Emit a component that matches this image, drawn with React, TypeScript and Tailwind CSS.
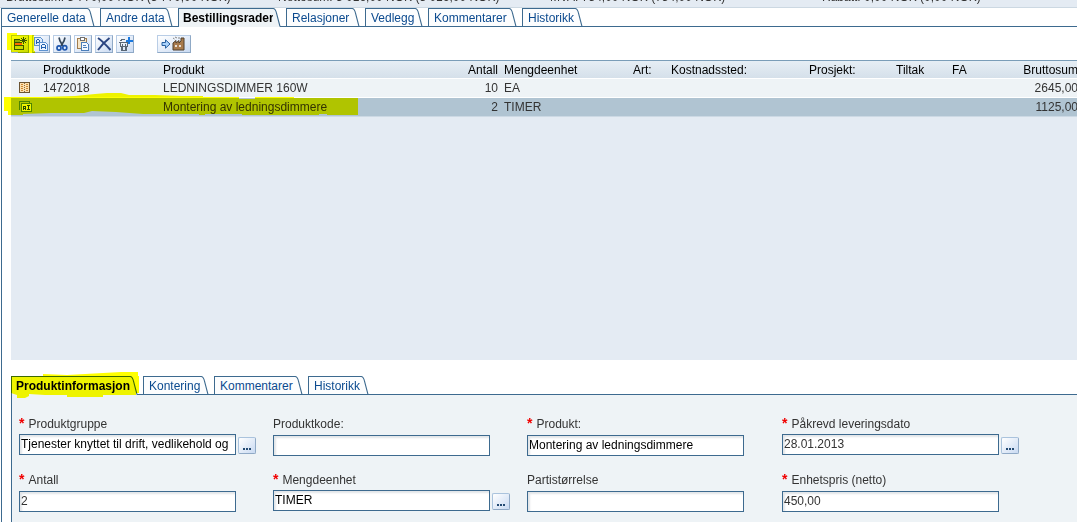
import React, { useState } from "react";
import clsx from "clsx";

const totals = [
  "Bruttosum: 3 770,00 NOK (3 770,00 NOK)",
  "Nettosum: 3 016,00 NOK (3 016,00 NOK)",
  "MVA: 754,00 NOK (754,00 NOK)",
  "Rabatt: 0,00 NOK (0,00 NOK)",
];

type TabItem = { label: string; width: string };

const orderTabs: TabItem[] = [
  { label: "Generelle data", width: "w-[94px]" },
  { label: "Andre data", width: "w-[73px]" },
  { label: "Bestillingsrader", width: "w-[103px]" },
  { label: "Relasjoner", width: "w-[74px]" },
  { label: "Vedlegg", width: "w-[58px]" },
  { label: "Kommentarer", width: "w-[89px]" },
  { label: "Historikk", width: "w-[61px]" },
];

const rowTabs: TabItem[] = [
  { label: "Produktinformasjon", width: "w-[127px]" },
  { label: "Kontering", width: "w-[66px]" },
  { label: "Kommentarer", width: "w-[89px]" },
  { label: "Historikk", width: "w-[61px]" },
];

function Tabs({ items, initial, name }: { items: TabItem[]; initial: number; name: string }) {
  const [active, setActive] = useState(initial);
  return (
    <div role="tablist" aria-label={name} className="flex h-[19px] gap-[5px] border-b border-[#3d6a8f]">
      {items.map((t, i) => {
        const on = i === active;
        return (
          <button
            key={t.label}
            type="button"
            role="tab"
            aria-selected={on}
            onClick={() => setActive(i)}
            className={clsx("flex shrink-0 text-left", t.width, on ? "relative h-[19px]" : "h-[18px]")}
          >
            <span
              className={clsx(
                "h-full min-w-0 flex-1 border-t border-l border-[#3d6a8f] leading-[18px] whitespace-nowrap",
                on ? "bg-[#eef3f6] pl-1 font-bold text-black" : "bg-[#fcfdfe] pl-[5px] text-[#0b4a8f]",
              )}
            >
              {t.label}
            </span>
            <svg
              width="8"
              height={on ? 19 : 18}
              viewBox={on ? "0 0 8 19" : "0 0 8 18"}
              className="shrink-0"
              aria-hidden="true"
            >
              <path d="M0 .5C2.5 .5 3 2.5 3.7 6L7 18V19H0Z" fill={on ? "#eef3f6" : "#fcfdfe"} />
              <path d="M0 .5C2.5 .5 3 2.5 3.7 6L7 18.5" fill="none" stroke="#3d6a8f" strokeWidth="1.1" />
            </svg>
          </button>
        );
      })}
    </div>
  );
}

function Icon({ children, w = 16 }: { children: React.ReactNode; w?: number }) {
  return (
    <svg width={w} height="16" viewBox={`0 0 ${w} 16`} shapeRendering="crispEdges" aria-hidden="true">
      {children}
    </svg>
  );
}

function ToolButton({ label, wide, children }: { label: string; wide?: boolean; children: React.ReactNode }) {
  return (
    <button
      type="button"
      aria-label={label}
      title={label}
      className={clsx(
        "flex h-[18px] items-center justify-center border border-[#b9cde6] border-r-[#8fa9c6] border-b-[#8fa9c6] bg-linear-to-br from-white to-[#c9daf2]",
        wide ? "w-[34px]" : "w-[18px]",
      )}
    >
      {children}
    </button>
  );
}

const AddRowIcon = () => (
  <Icon>
    <path d="M2 4H8V7H2Z" fill="#8fae9a" />
    <path d="M2 3.5H8M2.5 3V13.5H11.5V10M2 6.5H9" fill="none" stroke="#39576f" />
    <path d="M3 7H10V9H3Z" fill="#ff6b00" />
    <path d="M3 9.5H12" stroke="#39576f" />
    <path d="M3 10H11V13H3Z" fill="#c8dcc8" />
    <path d="M11.5 1V8M8 4.5H15" stroke="#39576f" />
    <path d="M9 2L14 7M14 2L9 7" stroke="#39576f" shapeRendering="auto" />
  </Icon>
);

const CopyIcon = () => (
  <Icon>
    <path d="M1.5 1.5H7.5L9.5 3.5V9.5H1.5Z" fill="#dbe9fb" stroke="#5d92cf" />
    <path d="M3.5 8V4.5L4.5 3.5H5.5L6.5 4.5V8M4 6.5H6" fill="none" stroke="#1f5fae" />
    <path d="M6.5 6.5H12.5L14.5 8.5V14.5H6.5Z" fill="#eef5ff" stroke="#5d92cf" />
    <path d="M8.5 13V9.5L9.5 8.5H11.5L12.5 9.5V13M9 11.5H12" fill="none" stroke="#1f5fae" />
  </Icon>
);

const CutIcon = () => (
  <svg width="16" height="16" viewBox="0 0 16 16" aria-hidden="true">
    <path d="M5 1.5L6 5L9 10M11 1.5L10 5L7 10" fill="none" stroke="#34465a" strokeWidth="1.7" />
    <ellipse cx="5" cy="12" rx="2" ry="2.2" fill="#dcebff" stroke="#1d55ad" strokeWidth="1.7" />
    <ellipse cx="10.8" cy="11.8" rx="2" ry="2.2" fill="#dcebff" stroke="#1d55ad" strokeWidth="1.7" />
  </svg>
);

const PasteIcon = () => (
  <Icon>
    <path d="M2.5 2.5H11.5V12.5H2.5Z" fill="#f7e6c6" stroke="#a07c4d" />
    <path d="M5 1H9V4H5Z" fill="#fff" stroke="#707070" />
    <path d="M6.5 6.5H11.5L13.5 8.5V14.5H6.5Z" fill="#f4f9ff" stroke="#4b7eb9" />
    <path d="M8 9.5H11M8 11.5H12" stroke="#4b7eb9" />
  </Icon>
);

const DeleteIcon = () => (
  <svg width="16" height="16" viewBox="0 0 16 16" aria-hidden="true">
    <path d="M2 2Q7 5.500 14.500 14M13.500 2Q7 7 2 14" fill="none" stroke="#2b4580" strokeWidth="2" />
  </svg>
);

const BinIcon = () => (
  <Icon>
    <path d="M2 6.5H11M3.5 7L4.5 14.5H9.5L10.5 7M5.500 8V14M8.500 8V14M4 10.5H10M3 5L6 3H8" fill="none" stroke="#596674" />
    <path d="M12 1V8M9 4.5H16" stroke="#1978df" strokeWidth="2" />
  </Icon>
);

const FactoryIcon = () => (
  <svg width="28" height="16" viewBox="0 0 28 16" aria-hidden="true">
    <path d="M2 6.5H5.5V3.8L10 8L5.5 12.2V9.5H2Z" fill="#a9d2fb" stroke="#275f9f" />
    <path d="M13 14V7L16 4.5V7L19 4.5V7L21 5V2H24V14Z" fill="#a87a4c" stroke="#51402f" />
    <path d="M15 10H17M19 10H21" stroke="#fff" strokeWidth="1.5" />
    <path d="M13 2L14.5 3M15 1L17 2M18 2H20" stroke="#858585" />
  </svg>
);

const ProductIcon = () => (
  <svg width="12" height="12" viewBox="0 0 12 12" shapeRendering="crispEdges" aria-hidden="true">
    <path d="M.5 .5H10.5V10.5H.5Z" fill="#fbdfae" stroke="#6b5432" />
    <path d="M2 2.5H4M2 4.5H4M2 6.5H4M2 8.5H4M7 2.5H9M7 4.5H9M7 6.5H9M7 8.5H9" stroke="#c98734" />
    <path d="M5.5 1V10" stroke="#8a6a3c" strokeDasharray="1 1" />
  </svg>
);

const ServiceIcon = () => (
  <svg width="14" height="12" viewBox="0 0 14 12" shapeRendering="crispEdges" aria-hidden="true">
    <path d="M.5 9V.5H10V2" fill="none" stroke="#4d85a8" />
    <path d="M2.5 2.5H12.5V10.5H2.5Z" fill="#edf3ff" stroke="#4d85a8" />
    <path d="M4.5 9V5.5H6.5V9M4.5 7.5H6.5M8 4.5H11M9.5 4.5V8.5M8 8.5H11" fill="none" stroke="#294863" />
  </svg>
);

type Col = { head: string; width: string; right?: boolean };
const columns: Col[] = [
  { head: "", width: "w-[32px]" },
  { head: "Produktkode", width: "w-[120px]" },
  { head: "Produkt", width: "w-[240px]" },
  { head: "Antall", width: "w-[101px]", right: true },
  { head: "Mengdeenhet", width: "w-[129px]" },
  { head: "Art:", width: "w-[38px]" },
  { head: "Kostnadssted:", width: "w-[138px]" },
  { head: "Prosjekt:", width: "w-[87px]" },
  { head: "Tiltak", width: "w-[56px]" },
  { head: "FA", width: "w-[50px]" },
  { head: "Bruttosum", width: "w-auto", right: true },
];

const rows: { selected: boolean; cells: React.ReactNode[] }[] = [
  { selected: false, cells: [<ProductIcon />, "1472018", "LEDNINGSDIMMER 160W", "10", "EA", "", "", "", "", "", "2645,00"] },
  { selected: true, cells: [<ServiceIcon />, "", "Montering av ledningsdimmere", "2", "TIMER", "", "", "", "", "", "1125,00"] },
];

function OrderTable() {
  return (
    <div className="min-h-[300px] overflow-hidden bg-[#e4ebf3]">
      <table className="w-full min-w-[1073px] table-fixed border-separate border-spacing-0">
        <thead>
          <tr>
            {columns.map((c, i) => (
              <th
                key={i}
                scope="col"
                className={clsx(
                  "h-[19px] border-t border-b border-t-[#7a9db8] border-b-white bg-linear-to-b from-[#e6eef5] to-[#d5e0ea] p-0 pt-px font-normal leading-4 text-black",
                  c.width,
                  c.right ? "pr-1.5 text-right" : "text-left",
                )}
              >
                {c.head}
              </th>
            ))}
          </tr>
        </thead>
        <tbody>
          {rows.map((r, i) => (
            <tr key={i} className={r.selected ? "bg-[#b0c4d2]" : "bg-[#eef3f6]"}>
              {r.cells.map((cell, j) => (
                <td
                  key={j}
                  className={clsx(
                    "h-[19px] border-b p-0 leading-[18px] whitespace-nowrap",
                    r.selected ? "border-[#ccd9e4]" : "border-white",
                    columns[j].right && "pr-1.5 text-right",
                    j === 0 && "pl-2",
                  )}
                >
                  {j === 0 ? <span className="flex">{cell}</span> : cell}
                </td>
              ))}
            </tr>
          ))}
        </tbody>
      </table>
    </div>
  );
}

type FieldProps = { id: string; label: string; value?: string; required?: boolean; lookup?: boolean; dark?: boolean };

const fields: FieldProps[] = [
  { id: "gruppe", label: "Produktgruppe", value: "Tjenester knyttet til drift, vedlikehold og", required: true, lookup: true, dark: true },
  { id: "kode", label: "Produktkode:" },
  { id: "produkt", label: "Produkt:", value: "Montering av ledningsdimmere", required: true, dark: true },
  { id: "dato", label: "Påkrevd leveringsdato", value: "28.01.2013", required: true, lookup: true },
  { id: "antall", label: "Antall", value: "2", required: true },
  { id: "enhet", label: "Mengdeenhet", value: "TIMER", required: true, lookup: true, dark: true },
  { id: "parti", label: "Partistørrelse" },
  { id: "pris", label: "Enhetspris (netto)", value: "450,00", required: true },
];

function Field({ id, label, value = "", required, lookup, dark }: FieldProps) {
  return (
    <div>
      <label htmlFor={id} className="flex h-5 gap-1 leading-5">
        {required && <span className="text-sm leading-[18px] font-bold text-[#f00000]">*</span>}
        {label}
      </label>
      <div className={clsx("flex h-[22px] gap-0.5", lookup ? "items-start" : "items-end")}>
        <input
          id={id}
          type="text"
          defaultValue={value}
          className={clsx(
            "h-[21px] w-[217px] border border-[#3d6a8f] bg-white px-px pb-0.5 shadow-[inset_2px_2px_2px_#e2e5e8] outline-none",
            dark ? "text-black" : "text-[#333]",
          )}
        />
        {lookup && (
          <button
            type="button"
            aria-label={`Velg ${label}`}
            className="mt-[3px] flex h-[17px] w-[18px] items-end justify-center rounded-xs border border-[#aac3dd] border-r-[#8fa9c6] border-b-[#8fa9c6] bg-linear-to-br from-white to-[#c9daf2] pb-[3px]"
          >
            <svg width="8" height="2" viewBox="0 0 8 2" aria-hidden="true">
              <path d="M0 0H2V2H0ZM3 0H5V2H3ZM6 0H8V2H6Z" fill="#234a73" />
            </svg>
          </button>
        )}
      </div>
    </div>
  );
}

export default function App() {
  return (
    <div className="overflow-hidden bg-white font-['Liberation_Sans',Arial,sans-serif] text-xs text-[#333]">
      <div className="grid h-2 grid-cols-[272px_272px_272px_1fr] content-end overflow-hidden border-b border-[#ccd8e2] bg-[#e4ebf3] pb-0.5 pl-1.5 leading-4">
        {totals.map((t) => (
          <span key={t} className="whitespace-nowrap">
            {t}
          </span>
        ))}
      </div>

      <div className="ml-px">
        <Tabs items={orderTabs} initial={2} name="Bestilling" />
        <main className="border-l border-[#3d6a8f] pl-[9px]">
          <div className="relative">
            <div role="toolbar" aria-label="Rader" className="flex h-[33px] items-center gap-[3px]">
              <ToolButton label="Ny rad"><AddRowIcon /></ToolButton>
              <ToolButton label="Kopier"><CopyIcon /></ToolButton>
              <ToolButton label="Klipp ut"><CutIcon /></ToolButton>
              <ToolButton label="Lim inn"><PasteIcon /></ToolButton>
              <ToolButton label="Slett"><DeleteIcon /></ToolButton>
              <ToolButton label="Tøm"><BinIcon /></ToolButton>
              <div className="pl-5">
                <ToolButton label="Send til produksjon" wide><FactoryIcon /></ToolButton>
              </div>
            </div>
            <OrderTable />
            <svg
              width="360"
              height="92"
              viewBox="0 0 360 92"
              className="pointer-events-none absolute top-0 -left-2 mix-blend-multiply"
              aria-hidden="true"
            >
              <path d="M4 6H14V8H31V24H32V26H15V25H8V23H4Z" fill="#ff0" />
              <path
                d="M1 70H40L72 69L92 67L104 66H118L126 68H152L180 69H200V70H236V72H252V70H291V71H355V88H324V87H316V88H239V87H202V88H196V87H140L113 85L89 84L81 86H48L20 87V88H5V84H1Z"
                fill="#ff0"
              />
            </svg>
          </div>

          <section className="relative pt-4">
            <Tabs items={rowTabs} initial={0} name="Rad" />
            <form
              className="grid grid-cols-[254px_254px_255px_1fr] gap-y-3.5 border-l border-[#3d6a8f] bg-[#eef3f6] pt-[19px] pb-2.5 pl-[7px]"
              onSubmit={(e) => e.preventDefault()}
            >
              {fields.map((f) => (
                <Field key={f.id} {...f} />
              ))}
            </form>
            <svg
              width="130"
              height="28"
              viewBox="0 0 130 28"
              className="pointer-events-none absolute top-[11px] left-0 mix-blend-multiply"
              aria-hidden="true"
            >
              <path d="M0 5H32V3L56 4L110 1H127V5H128V22H125V24H92V26H56V24H34L18 23V25L14 27H6V24L0 22Z" fill="#ff0" />
            </svg>
          </section>
        </main>
      </div>
    </div>
  );
}
